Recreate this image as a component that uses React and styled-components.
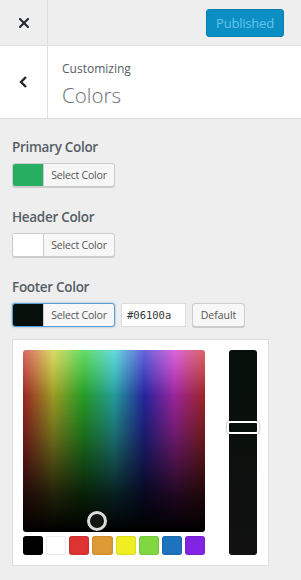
import React from "react";
import styled, { createGlobalStyle } from "styled-components";

const GlobalStyle = createGlobalStyle`
  html, body {
    margin: 0;
    padding: 0;
    background: #eeeeee;
  }
  body {
    font-family: "Open Sans", "Noto Sans", sans-serif;
    color: #555d66;
  }
  * { box-sizing: border-box; }
`;

const swatches = ["#000000", "#ffffff", "#dd3333", "#dd9933", "#eeee22", "#81d742", "#1e73be", "#8224e3"];

const controls = [
  { label: "Primary Color", color: "#27ae60" },
  { label: "Header Color", color: "#ffffff" },
];

const App = () => {
  return (
    <Panel>
      <GlobalStyle />
      <Header>
        <IconButton aria-label="Close">
          <svg width="10" height="10" viewBox="0 0 10 10">
            <path d="M1 1L9 9M9 1L1 9" stroke="#23282d" strokeWidth="2" strokeLinecap="square" />
          </svg>
        </IconButton>
        <HeaderActions>
          <PublishButton disabled>Published</PublishButton>
        </HeaderActions>
      </Header>

      <SectionTitle>
        <IconButton aria-label="Back">
          <svg width="9" height="12" viewBox="0 0 9 12">
            <path d="M7 1L2 6L7 11" fill="none" stroke="#23282d" strokeWidth="2.4" />
          </svg>
        </IconButton>
        <TitleText>
          <small>Customizing</small>
          <h3>Colors</h3>
        </TitleText>
      </SectionTitle>

      <Controls>
        {controls.map((c) => (
          <Control key={c.label}>
            <Label>{c.label}</Label>
            <ColorResult>
              <Swatch color={c.color} />
              <span>Select Color</span>
            </ColorResult>
          </Control>
        ))}

        <Control>
          <Label>Footer Color</Label>
          <Row>
            <ColorResult focused>
              <Swatch color="#06100a" />
              <span>Select Color</span>
            </ColorResult>
            <HexInput defaultValue="#06100a" />
            <SmallButton>Default</SmallButton>
          </Row>
        </Control>

        <Picker>
          <PickerMain>
            <Square>
              <Handle style={{ left: "74px", top: "171px" }} />
            </Square>
            <Palette>
              {swatches.map((s) => (
                <PaletteItem key={s} color={s} />
              ))}
            </Palette>
          </PickerMain>
          <Strip>
            <StripHandle style={{ top: "71px" }} />
          </Strip>
        </Picker>
      </Controls>
    </Panel>
  );
};

const Panel = styled.div`
  width: 301px;
  height: 580px;
  overflow: hidden;
  background: #eeeeee;
`;

const Header = styled.div`
  display: flex;
  align-items: center;
  height: 46px;
  border-bottom: 1px solid #dddddd;
  background: #eeeeee;
`;

const IconButton = styled.div`
  width: 48px;
  align-self: stretch;
  display: flex;
  align-items: center;
  justify-content: center;
  border-right: 1px solid #dddddd;
  flex-shrink: 0;
`;

const HeaderActions = styled.div`
  flex: 1;
  display: flex;
  justify-content: flex-end;
  padding-right: 17px;
`;

const PublishButton = styled.button`
  height: 28px;
  width: 78px;
  padding: 0;
  border: 1px solid #0a7fb0;
  border-radius: 3px;
  background: #0a8ec4;
  color: #66c6e8;
  font-family: "Open Sans", sans-serif;
  font-size: 13px;
  letter-spacing: -0.2px;
`;

const SectionTitle = styled.div`
  display: flex;
  height: 73px;
  background: #ffffff;
  border-bottom: 1px solid #dddddd;
`;

const TitleText = styled.div`
  display: flex;
  flex-direction: column;
  justify-content: center;
  padding: 4px 0 0 14px;

  small {
    font-size: 12px;
    line-height: 19px;
    color: #555d66;
  }
  h3 {
    margin: 3px 0 0;
    font-size: 20.5px;
    line-height: 28px;
    font-weight: 300;
    color: #6b7177;
  }
`;

const Controls = styled.div`
  padding: 18px 12px 0;
`;

const Control = styled.div`
  margin-bottom: 20px;
`;

const Label = styled.div`
  font-size: 13.5px;
  line-height: 20px;
  font-weight: 600;
  letter-spacing: -0.3px;
  color: #555d66;
  margin-bottom: 6px;
`;

const Row = styled.div`
  display: flex;
  align-items: center;
  gap: 6px;
`;

const ColorResult = styled.div`
  display: flex;
  width: 103px;
  height: 24px;
  border: 1px solid ${(p) => (p.focused ? "#5b9dd9" : "#cccccc")};
  border-radius: 3px;
  overflow: hidden;
  background: #f7f7f7;
  box-shadow: ${(p) => (p.focused ? "0 0 2px rgba(0,115,170,0.6)" : "0 1px 0 #cccccc")};

  span {
    flex: 1;
    border-left: 1px solid #cccccc;
    font-size: 10.5px;
    line-height: 22px;
    text-align: center;
    color: #555555;
    letter-spacing: -0.2px;
  }
`;

const Swatch = styled.div`
  width: 30px;
  background: ${(p) => p.color};
`;

const HexInput = styled.input`
  width: 65px;
  height: 24px;
  border: 1px solid #dddddd;
  background: #ffffff;
  padding: 0 5px;
  font-family: "DejaVu Sans Mono", "Liberation Mono", monospace;
  font-size: 10.5px;
  color: #32373c;
  outline: none;
`;

const SmallButton = styled.button`
  width: 53px;
  height: 24px;
  padding: 0;
  border: 1px solid #cccccc;
  border-radius: 3px;
  background: #f7f7f7;
  box-shadow: 0 1px 0 #cccccc;
  font-family: "Open Sans", sans-serif;
  font-size: 10.5px;
  color: #555555;
`;

const Picker = styled.div`
  display: flex;
  width: 257px;
  margin-top: -8px;
  padding: 10px 11px 10px 10px;
  background: #ffffff;
  border: 1px solid #dfdfdf;
  gap: 24px;
`;

const PickerMain = styled.div`
  width: 182px;
  display: flex;
  flex-direction: column;
  gap: 4px;
`;

const Square = styled.div`
  position: relative;
  width: 182px;
  height: 182px;
  border-radius: 3px;
  background:
    linear-gradient(to bottom, rgba(255,255,255,0.25) 0%, rgba(255,255,255,0) 25%),
    linear-gradient(to bottom, rgba(0,0,0,0) 0%, rgba(0,0,0,0.45) 45%, rgba(0,0,0,0.85) 80%, #000 100%),
    linear-gradient(rgba(128,128,128,0.38), rgba(128,128,128,0.38)),
    linear-gradient(to right, #ff0000 0%, #ffff00 16.7%, #00ff00 33.3%, #00ffff 50%, #0000ff 66.7%, #ff00ff 83.3%, #ff0000 100%);
`;

const Handle = styled.div`
  position: absolute;
  width: 20px;
  height: 20px;
  margin: -10px 0 0 -10px;
  border-radius: 50%;
  border: 3px solid #dcdcdc;
  background: #111611;
  box-shadow: 0 0 1px rgba(0,0,0,0.4);
`;

const Palette = styled.div`
  display: grid;
  grid-template-columns: repeat(8, 1fr);
  gap: 3px;
`;

const PaletteItem = styled.div`
  height: 19px;
  border-radius: 3px;
  background: ${(p) => p.color};
  box-shadow: inset 0 0 2px rgba(0,0,0,0.25);
`;

const Strip = styled.div`
  position: relative;
  width: 28px;
  height: 205px;
  border-radius: 3px;
  background: linear-gradient(to bottom, #06100a, #111111);
`;

const StripHandle = styled.div`
  position: absolute;
  left: -2px;
  right: -2px;
  height: 13px;
  border: 2px solid #ffffff;
  border-radius: 3px;
  background: #06100a;
  box-shadow: 0 0 2px rgba(0,0,0,0.6);
`;

export default App;
